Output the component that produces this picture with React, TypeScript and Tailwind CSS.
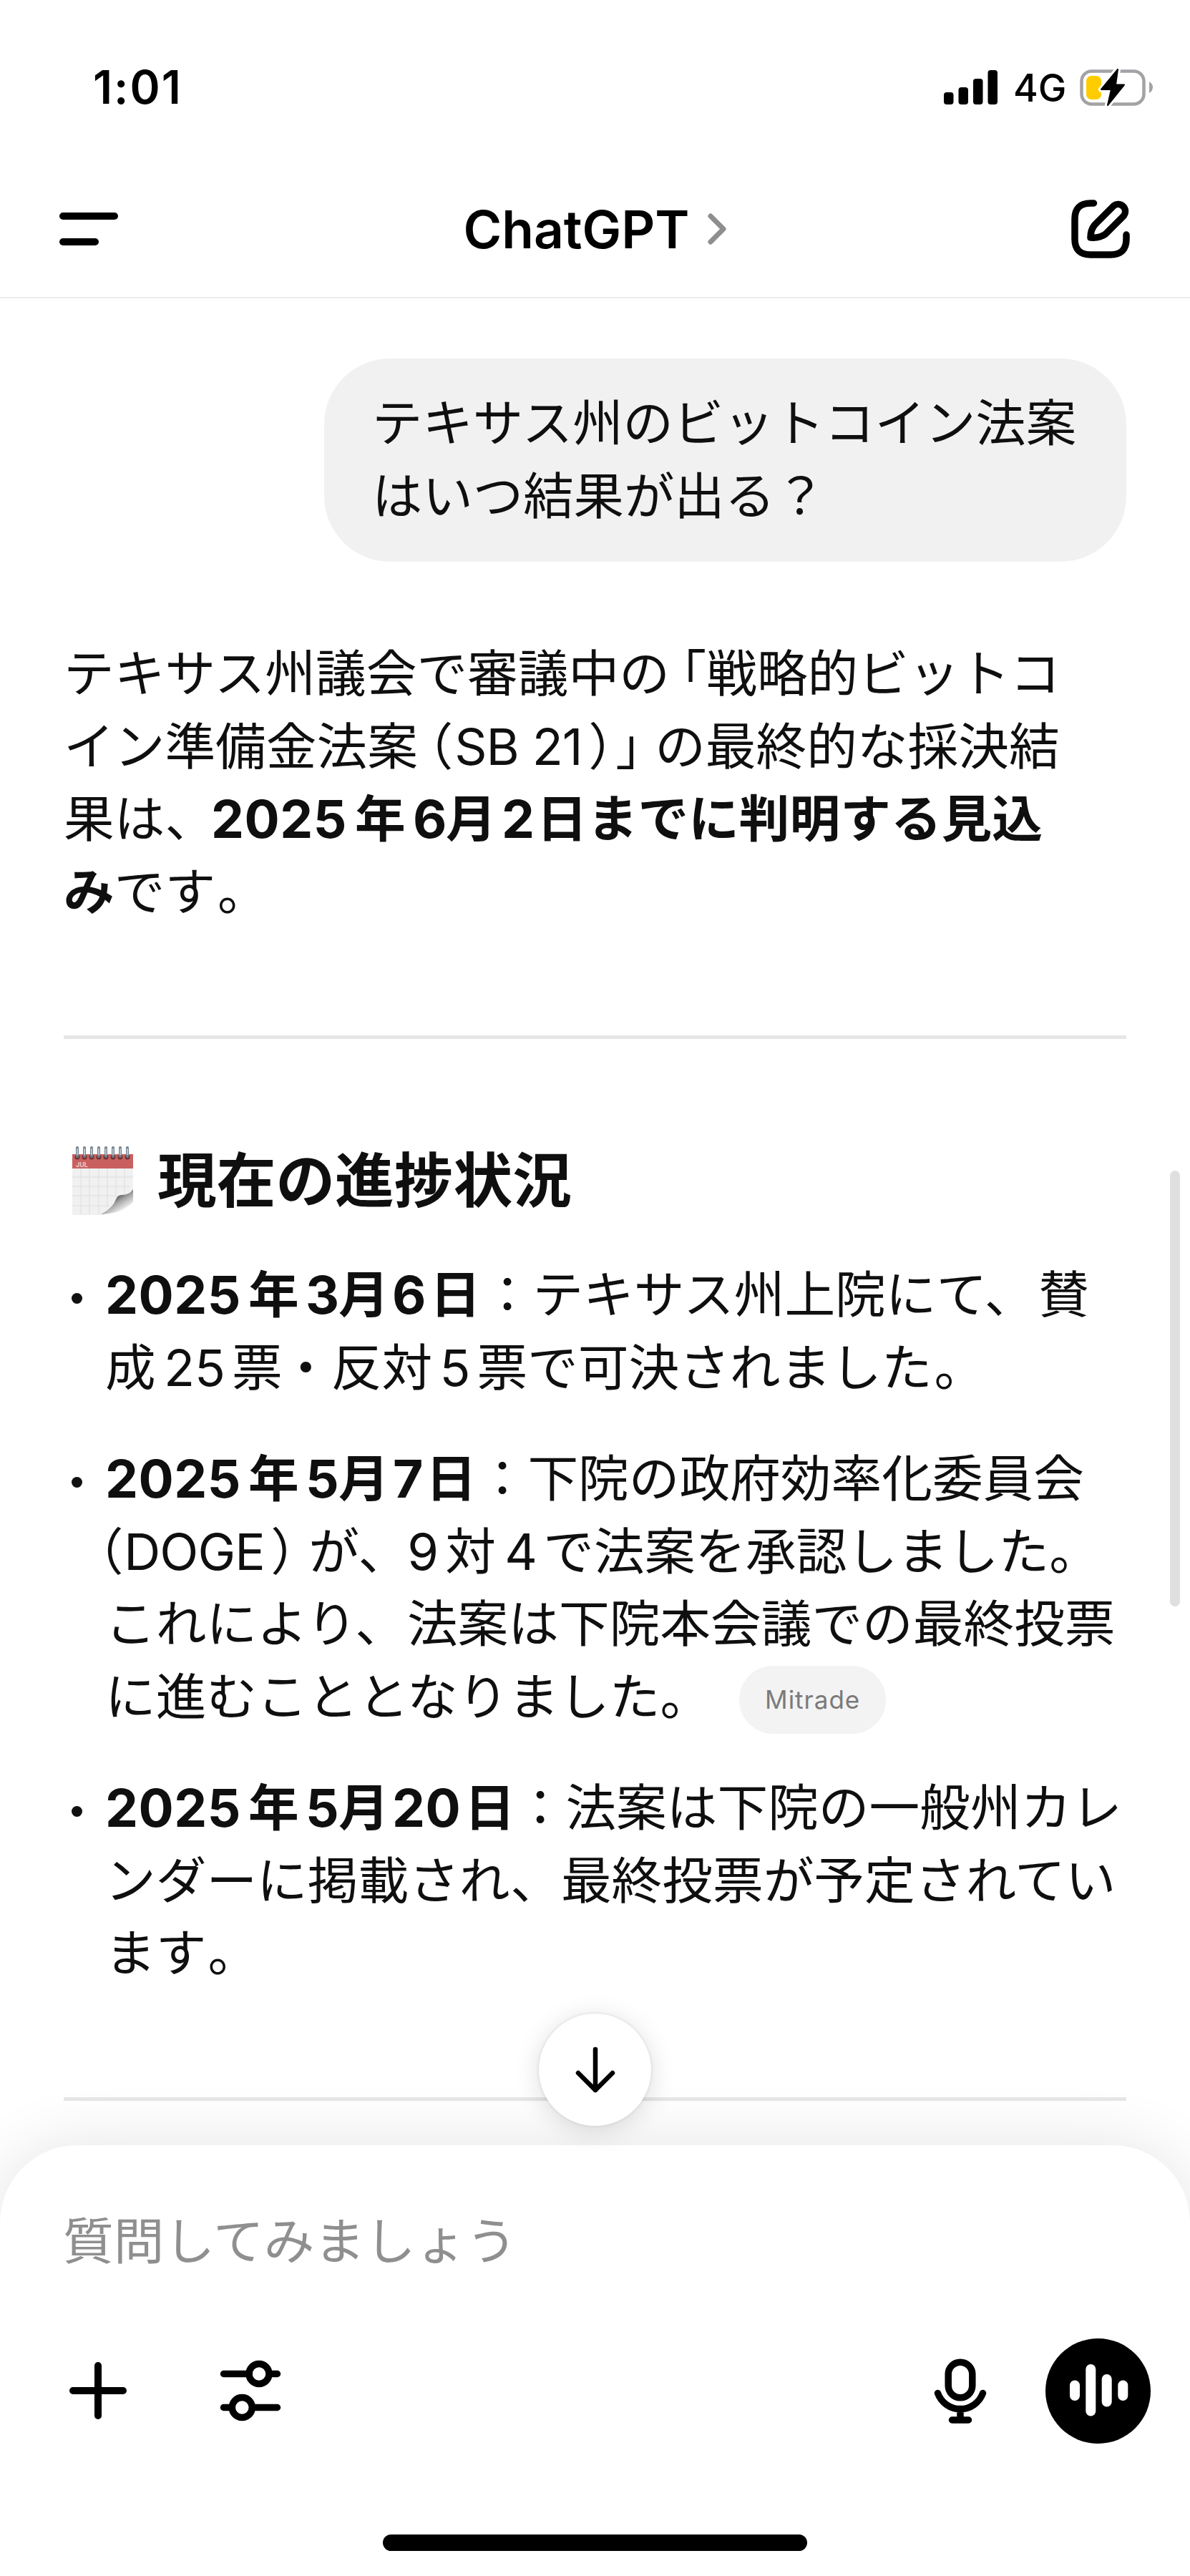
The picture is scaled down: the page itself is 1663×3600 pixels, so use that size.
import type { ReactNode } from "react";

function StatusBar() {
  return (
    <div className="flex h-[243px] items-center justify-between pl-[130px] pr-[51px]">
      <span className="text-[64px] font-semibold leading-none tracking-[2px]">1:01</span>
      <div className="flex items-center">
        <svg width="76" height="48" viewBox="0 0 76 48">
          <rect x="0" y="31" width="13.5" height="17" rx="4" />
          <rect x="20.5" y="24" width="13.5" height="24" rx="4" />
          <rect x="41" y="12" width="13.5" height="36" rx="4" />
          <rect x="61.5" y="0" width="13.5" height="48" rx="4" />
        </svg>
        <span className="ml-[21px] w-[93px] pt-[3px] text-[53px] font-medium leading-none">4G</span>
        <svg width="103" height="54" viewBox="0 0 103 54">
          <rect x="2.5" y="4.5" width="87" height="46" rx="14" fill="none" stroke="#a3a3a6" strokeWidth="4.5" />
          <path d="M97 19v16q5-3 5-8t-5-8z" fill="#a3a3a6" />
          <rect x="9" y="11" width="21" height="33" rx="7" fill="#ffcc00" />
          <path d="M53 2L30 30h14L39 52L62 23.500H50z" stroke="#fff" strokeWidth="8" strokeLinejoin="round" />
          <path d="M53 2L30 30h14L39 52L62 23.500H50z" stroke="#000" strokeWidth="2" strokeLinejoin="round" />
        </svg>
      </div>
    </div>
  );
}

function NavBar() {
  return (
    <div className="flex h-[154px] items-center justify-between pl-[83px] pr-[84px]">
      <svg width="82" height="82" viewBox="0 0 82 82" stroke="#000" strokeWidth="10" strokeLinecap="round">
        <path d="M5 23h72M5 59h45" />
      </svg>
      <div className="flex items-center">
        <h1 className="text-[73px] font-semibold leading-none">ChatGPT</h1>
        <svg className="ml-[25px]" width="26" height="46" viewBox="0 0 26 46" fill="none">
          <path d="M4 5l18 18L4 41" stroke="#8e8e8e" strokeWidth="7" strokeLinecap="round" strokeLinejoin="round" />
        </svg>
      </div>
      <svg width="82" height="82" viewBox="0 0 82 82" fill="none" stroke="#000" strokeWidth="9.500" strokeLinecap="round" strokeLinejoin="round">
        <path d="M31.500 5H27Q5 5 5 27v28q0 22 22 22h28q22 0 22-22v-6" />
        <path d="M27 53q0-12 7-19L59.500 8.500a10 10 0 0 1 14 14L48 48q-8 6-21 5z" />
      </svg>
    </div>
  );
}

function CalendarIcon() {
  const rings = [7, 17, 27, 37, 47, 57, 67, 77];
  return (
    <svg width="86" height="98" viewBox="0 0 86 98">
      <defs>
        <linearGradient id="curl" x1="0.35" y1="0.3" x2="0.75" y2="0.8">
          <stop offset="0" stopColor="#444" />
          <stop offset="0.45" stopColor="#a5a5a5" />
          <stop offset="1" stopColor="#f4f4f4" />
        </linearGradient>
      </defs>
      <path d="M0 31h85v36L43 97H0z" fill="#f1f1f1" />
      <path d="M0 44h85M0 57h80M0 70h62M0 84h52M12 32v64M24 32v64M37 32v64M49 32v54M61 32v40M73 32v36" stroke="#e3e3e3" strokeWidth="1.500" />
      <path d="M0 12h85v20H0z" fill="#c9605f" />
      <text x="5" y="30" fontSize="9" fill="#f3d6d0">JUL</text>
      <path d="M85 61q-5 8-16 8-6 0-8 6-4 12-21 21 30-1 45-17z" fill="url(#curl)" />
      {rings.map((x) => (
        <g key={x}>
          <circle cx={x} cy="16" r="3.500" fill="#6b3436" />
          <path d={`M${x} 15V3`} stroke="#72808c" strokeWidth="4" strokeLinecap="round" />
          <path d={`M${x} 13V4`} stroke="#cfe0ee" strokeWidth="1.500" />
        </g>
      ))}
    </svg>
  );
}

function Line({ children }: { children: ReactNode }) {
  return <span className="flex h-[101.6px] items-center whitespace-nowrap">{children}</span>;
}

function Bold({ children, className = "" }: { children: ReactNode; className?: string }) {
  return <strong className={`font-semibold ${className}`}>{children}</strong>;
}

// Latin digits run slightly larger than the kanji around them
function Num({ children, className = "" }: { children: ReactNode; className?: string }) {
  return <strong className={`text-[73px] font-bold tracking-[0.5px] ${className}`}>{children}</strong>;
}

// Half-width form of a full-width bracket
function Bracket({ children, className = "" }: { children: ReactNode; className?: string }) {
  return <span className={`[font-feature-settings:'halt'] ${className}`}>{children}</span>;
}

function Item({ children }: { children: ReactNode }) {
  return (
    <li className="flex">
      <span className="ml-[11px] mr-[32px] mt-[48px] size-[15px] shrink-0 rounded-full bg-[#111]" />
      <div>{children}</div>
    </li>
  );
}

function Answer() {
  return (
    <article className="px-[89px] text-[#0f0f0f]">
      <p className="mt-[106px]">
        <Line>
          テキサス州議会で審議中の<Bracket className="ml-[16px]">「</Bracket>戦略的ビットコ
        </Line>
        <Line>
          イン準備金法案<Bracket className="ml-[14px]">（</Bracket>
          <span className="w-[189px] pl-[2px] -tracking-[1px]">SB 21</span>
          <Bracket className="w-[38px]">）</Bracket>
          <Bracket className="w-[55px]">」</Bracket>の最終的な採決結
        </Line>
        <Line>
          果は、
          <Num className="-ml-[6px] w-[201px]">2025</Num>
          <Bold className="w-[81px]">年</Bold>
          <Num className="w-[46px]">6</Num>
          <Bold className="w-[78px]">月</Bold>
          <Num className="w-[49px]">2</Num>
          <Bold>日までに判明する見込</Bold>
        </Line>
        <Line>
          <Bold>み</Bold>です<span className="ml-[3px]">。</span>
        </Line>
      </p>

      <hr className="mt-[150px] h-[5px] border-0 bg-[#e6e6e6]" />

      <h2 className="mt-[148px] flex h-[100px] items-center text-[82.7px] font-semibold leading-none">
        <span className="ml-[12px] mr-[33px]">
          <CalendarIcon />
        </span>
        現在の進捗状況
      </h2>

      <ul className="mt-[59px] flex flex-col gap-[53.6px]">
        <Item>
          <Line>
            <Num className="w-[200px]">2025</Num>
            <Bold className="w-[80px]">年</Bold>
            <Num className="w-[46px]">3</Num>
            <Bold className="w-[75px]">月</Bold>
            <Num className="w-[53px]">6</Num>
            <Bold>日</Bold>
            <span className="ml-[2px]">：テキサス州上院にて、</span>
            <span className="ml-[5px]">賛</span>
          </Line>
          <Line>
            <span className="w-[82px]">成</span>
            <span className="w-[95px]">25</span>
            <span className="w-[68px]">票</span>・反
            <span className="w-[81px]">対</span>
            <span className="w-[52px]">5</span>
            票で可決されました<span className="ml-[3px]">。</span>
          </Line>
        </Item>
        <Item>
          <Line>
            <Num className="w-[200px]">2025</Num>
            <Bold className="w-[80px]">年</Bold>
            <Num className="w-[46px]">5</Num>
            <Bold className="w-[76px]">月</Bold>
            <Num className="w-[46px]">7</Num>
            <Bold>日</Bold>
            <span className="ml-px">：下院の政府効率化委員会</span>
          </Line>
          <Line>
            <Bracket className="-ml-[10px]">（</Bracket>
            <span className="w-[206px] pl-px -tracking-[1px]">DOGE</span>
            <Bracket className="w-[53px]">）</Bracket>
            <span className="w-[138px]">が、</span>
            <span className="w-[53px]">9</span>
            <span className="w-[83px]">対</span>
            <span className="w-[54px]">4</span>
            で法案を承認しました。
          </Line>
          <Line>
            これにより、<span className="ml-[2px]">法案は下院本会議での最終投票</span>
          </Line>
          <Line>
            に進むこととなりました。
            <span className="ml-[40px] mt-[8px] flex h-[95px] w-[205px] items-center justify-center rounded-full bg-[#f3f3f3] text-[35px] leading-none tracking-[1px] text-[#7a7a7a]">
              Mitrade
            </span>
          </Line>
        </Item>
        <Item>
          <Line>
            <Num className="w-[200px]">2025</Num>
            <Bold className="w-[80px]">年</Bold>
            <Num className="w-[46px]">5</Num>
            <Bold className="w-[75px]">月</Bold>
            <Num className="w-[101px]">20</Num>
            <Bold>日</Bold>：法案は下院の一般州カレ
          </Line>
          <Line>ンダーに掲載され、最終投票が予定されてい</Line>
          <Line>
            ます<span className="ml-[2px]">。</span>
          </Line>
        </Item>
      </ul>

      <hr className="mt-[150px] h-[5px] border-0 bg-[#e6e6e6]" />
    </article>
  );
}

function Composer() {
  return (
    <footer className="relative h-[602px] shrink-0 rounded-t-[108px] bg-white shadow-[0_0_90px_rgba(0,0,0,0.11)]">
      <p className="pl-[88px] pt-[84px] leading-[101.6px] text-[#8f8f8f]">質問してみましょう</p>
      <div className="mt-[84px] flex items-center pl-[97px] pr-[55px]">
        <svg width="80" height="80" viewBox="0 0 80 80" stroke="#000" strokeWidth="10" strokeLinecap="round">
          <path d="M40 5v70M5 40h70" />
        </svg>
        <svg className="ml-[130px]" width="86" height="86" viewBox="0 0 86 86" fill="none" stroke="#000" strokeWidth="9.500" strokeLinecap="round">
          <path d="M5.500 19.500h36M71 19.500h9.500M5.500 66.500h9M47 66.500h33.500" />
          <circle cx="55" cy="19.500" r="14" />
          <circle cx="31.300" cy="66.500" r="14" />
        </svg>
        <svg className="ml-auto" width="74" height="92" viewBox="0 0 74 92" fill="none" stroke="#000" strokeWidth="9.500" strokeLinecap="round">
          <rect x="20.200" y="6.200" width="33.600" height="49.500" rx="16.800" />
          <path d="M5.500 49.500a33.500 33.500 0 0 0 63 0M37 72v15M25.500 87h23" />
        </svg>
        <svg className="ml-[82px]" width="147" height="147" viewBox="0 0 147 147">
          <circle cx="73.500" cy="73.500" r="73.500" />
          <g stroke="#fff" strokeWidth="14" strokeLinecap="round">
            <path d="M41 65.500v14.500M63.300 43v58.500M85.700 57v31.500M108.300 65.500v14.500" />
          </g>
        </svg>
      </div>
      <div className="mx-auto mt-[127px] h-[23px] w-[593px] rounded-full bg-black" />
    </footer>
  );
}

export default function App() {
  return (
    <div className="relative flex h-[3600px] w-[1663px] flex-col overflow-hidden bg-white font-['Inter','Noto_Sans_CJK_JP',sans-serif] text-[70.7px] leading-[101.6px] [text-spacing-trim:space-all]" lang="ja">
      <header className="h-[417px] shrink-0 border-b-2 border-[#ececec]">
        <StatusBar />
        <NavBar />
      </header>

      <main className="min-h-0 flex-1">
        <div className="mt-[84px] flex justify-end pr-[89px]">
          <div className="w-[1121px] rounded-[92px] bg-[#f1f1f1] py-[40.4px] pl-[67px] text-[70.4px] text-[#0f0f0f]">
            <Line>テキサス州のビットコイン法案</Line>
            <Line>はいつ結果が出る？</Line>
          </div>
        </div>
        <Answer />
      </main>

      <Composer />

      {/* scroll thumb */}
      <div className="absolute right-[14px] top-[1636px] h-[609px] w-[14px] rounded-full bg-[#dfdfdf]" />

      {/* jump to latest */}
      <button className="absolute left-[753px] top-[2814px] flex size-[157px] items-center justify-center rounded-full bg-white shadow-[0_6px_36px_rgba(0,0,0,0.14),0_0_4px_rgba(0,0,0,0.12)]">
        <svg width="56" height="66" viewBox="0 0 56 66" fill="none" stroke="#000" strokeWidth="6.500" strokeLinecap="round" strokeLinejoin="round">
          <path d="M28 4v57M4 37l24 24 24-24" />
        </svg>
      </button>
    </div>
  );
}
